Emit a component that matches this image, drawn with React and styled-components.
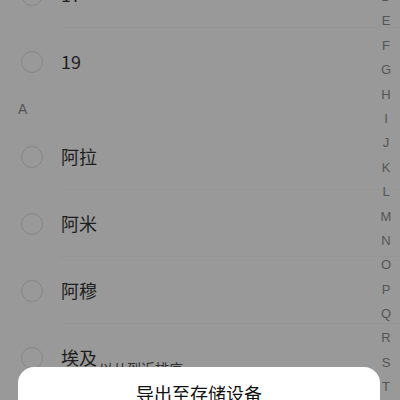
import React from 'react';
import styled, { createGlobalStyle } from 'styled-components';

const GlobalStyle = createGlobalStyle`
    body {
        margin: 0;
        background: #999999;
        font-family: "Noto Sans CJK SC", "Noto Sans", sans-serif;
        overflow: hidden;
    }
`;

const groups = [
    { title: null, items: ['17', '19'] },
    { title: 'A', items: ['阿拉', '阿米', '阿穆', '埃及'] },
];

const letters = 'DEFGHIJKLMNOPQRSTUVWXYZ#'.split('');

function App(){
    return(
        <Screen>
            <GlobalStyle />
            <List>
                {groups.map((g, gi) => (
                    <div key={gi}>
                        {g.title && <Header>{g.title}</Header>}
                        {g.items.map((name, i) => (
                            <Row key={name}>
                                <CheckCell><Circle /></CheckCell>
                                <Label $last={i === g.items.length - 1}>
                                    {name}
                                    {name === '埃及' && <Hint>以从到近排序</Hint>}
                                </Label>
                            </Row>
                        ))}
                    </div>
                ))}
            </List>

            <Index>
                {letters.map((l) => <Letter key={l}>{l}</Letter>)}
            </Index>

            <Sheet>
                <SheetButton>导出至存储设备</SheetButton>
            </Sheet>
        </Screen>
    )
}

export default App

const Screen = styled.div`
    position: relative;
    width: 400px;
    height: 400px;
    overflow: hidden;
    background: #999999;
`;

const List = styled.div`
    display: flex;
    flex-direction: column;
    margin-top: -39px;
`;

const Header = styled.div`
    height: 28px;
    display: flex;
    align-items: center;
    padding-left: 18px;
    font-family: "Liberation Sans", "Noto Sans CJK SC", sans-serif;
    font-size: 14px;
    color: #555555;
`;

const Row = styled.div`
    display: flex;
    align-items: stretch;
    height: 67px;
`;

const CheckCell = styled.div`
    width: 40px;
    padding-left: 21px;
    display: flex;
    align-items: center;
`;

const Circle = styled.div`
    width: 20px;
    height: 20px;
    border-radius: 50%;
    border: 1.5px solid #878787;
`;

const Label = styled.div`
    flex: 1;
    display: flex;
    align-items: center;
    font-size: 18px;
    color: #1e1e1e;
    border-bottom: 1px solid ${(p) => (p.$last ? 'transparent' : '#959595')};
    white-space: nowrap;
`;

const Hint = styled.span`
    font-size: 14px;
    color: #333333;
    margin-left: 2px;
    margin-top: 22px;
`;

const Index = styled.div`
    position: absolute;
    top: -15px;
    right: 4px;
    width: 20px;
    display: flex;
    flex-direction: column;
    align-items: center;
`;

const Letter = styled.div`
    height: 24.4px;
    line-height: 24.4px;
    font-family: "Liberation Sans", Arial, sans-serif;
    font-size: 13px;
    color: #555555;
`;

const Sheet = styled.div`
    position: absolute;
    left: 18px;
    right: 20px;
    top: 367px;
    height: 60px;
    background: #ffffff;
    border-radius: 16px 16px 0 0;
    display: flex;
    justify-content: center;
`;

const SheetButton = styled.div`
    padding-top: 13px;
    font-size: 18px;
    color: #111111;
`;
